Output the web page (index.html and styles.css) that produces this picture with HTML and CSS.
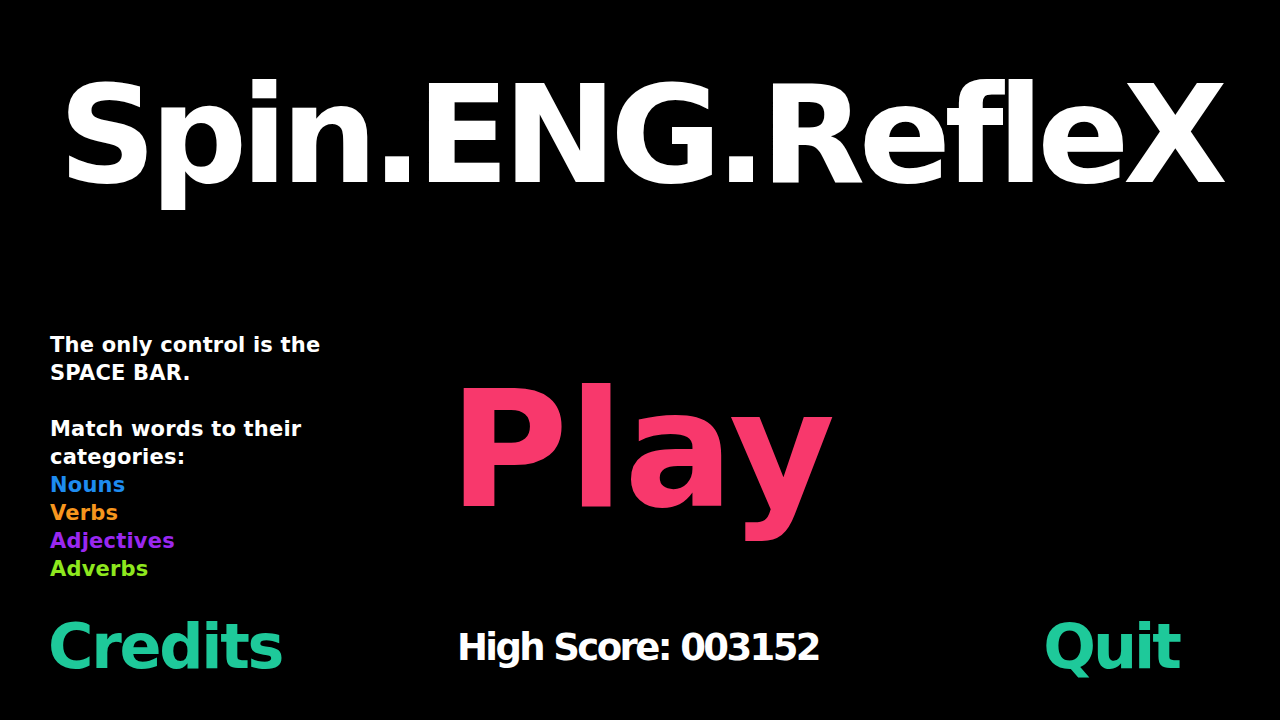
FILE: index.html
```html
<!DOCTYPE html>
<html>
<head>
<meta charset="utf-8">
<link rel="stylesheet" href="styles.css">
</head>
<body>
<div class="screen">
  <h1 class="title">Spin.ENG.RefleX</h1>
  <div class="middle">
    <div class="info">
      <p>The only control is the<br>SPACE BAR.</p>
      <p>Match words to their<br>categories:<br>
        <span class="nouns">Nouns</span><br>
        <span class="verbs">Verbs</span><br>
        <span class="adjectives">Adjectives</span><br>
        <span class="adverbs">Adverbs</span>
      </p>
    </div>
    <div class="play">Play</div>
    <div class="spacer"></div>
  </div>
  <div class="bottom">
    <div class="credits">Credits</div>
    <div class="score">High Score: 003152</div>
    <div class="quit">Quit</div>
  </div>
</div>
</body>
</html>
```
FILE: styles.css
```css
html, body {
  margin: 0;
  padding: 0;
  background: #000;
}
.screen {
  width: 1280px;
  height: 720px;
  overflow: hidden;
  display: flex;
  flex-direction: column;
  font-family: "DejaVu Sans", sans-serif;
  font-weight: 700;
  color: #fff;
}
.title {
  margin: 67px 0 0 0;
  font-size: 136px;
  line-height: 136px;
  font-weight: 700;
  text-align: center;
  letter-spacing: -6.5px;
  padding-left: 0;
}
.middle {
  margin-top: 128px;
  display: grid;
  grid-template-columns: 1fr auto 1fr;
  align-items: start;
}
.info {
  padding-left: 50px;
  font-size: 21px;
  line-height: 28px;
  letter-spacing: 0.2px;
}
.info p {
  margin: 0 0 28px 0;
}
.info p:last-child { margin-bottom: 0; }
.nouns { color: #1e8cf0; }
.verbs { color: #f7961e; }
.adjectives { color: #9a28f0; }
.adverbs { color: #8ee81e; }
.play {
  margin-top: 37px;
  padding-left: 4px;
  font-size: 163px;
  line-height: 163px;
  color: #f8386c;
}
.bottom {
  margin-top: 33px;
  display: grid;
  grid-template-columns: 1fr auto 1fr;
  align-items: center;
  padding: 0 100px 0 48px;
}
.credits {
  font-size: 62px;
  line-height: 62px;
  letter-spacing: -2.3px;
  color: #1ec99a;
}
.score {
  font-size: 37px;
  line-height: 37px;
  letter-spacing: -2.6px;
  padding-left: 48px;
}
.quit {
  justify-self: end;
  font-size: 62px;
  line-height: 62px;
  letter-spacing: -3px;
  margin-right: 1px;
  color: #1ec99a;
}
```
